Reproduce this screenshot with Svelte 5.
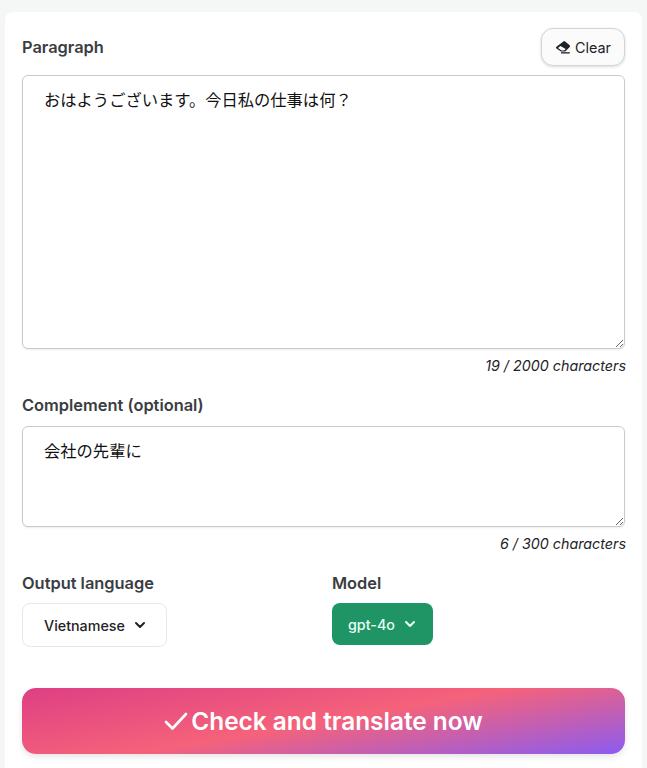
<script>
  let paragraph = $state("おはようございます。今日私の仕事は何？");
  let complement = $state("会社の先輩に");
</script>

<main>
  <section class="card">
    <div class="head">
      <span class="label">Paragraph</span>
      <button class="clear">
        <svg viewBox="0 0 16 16" width="16" height="16" fill="#1f2328">
          <path d="M8.4 2.4a1.2 1.2 0 0 1 1.7 0l4.6 3.9a1.2 1.2 0 0 1 0 1.7l-4.4 4.6H6L1.4 9.4a1.2 1.2 0 0 1 0-1.7zM5.4 6.9 3 9l3.6 2.6h2.6l1.5-1.6z" />
          <rect x="6" y="13.2" width="8.8" height="1.3" />
        </svg>
        Clear
      </button>
    </div>
    <textarea class="big" bind:value={paragraph}></textarea>
    <div class="count">19 / 2000 characters</div>

    <div class="label second">Complement (optional)</div>
    <textarea class="small" bind:value={complement}></textarea>
    <div class="count">6 / 300 characters</div>

    <div class="options">
      <div>
        <div class="label">Output language</div>
        <button class="select">
          Vietnamese
          <svg viewBox="0 0 12 12" width="12" height="12" fill="none" stroke="#1f2328" stroke-width="2" stroke-linecap="round" stroke-linejoin="round"><path d="M2 4l4 4 4-4" /></svg>
        </button>
      </div>
      <div>
        <div class="label">Model</div>
        <button class="model">
          gpt-4o
          <svg viewBox="0 0 12 12" width="12" height="12" fill="none" stroke="#e8fff4" stroke-width="2" stroke-linecap="round" stroke-linejoin="round"><path d="M2 4l4 4 4-4" /></svg>
        </button>
      </div>
    </div>

    <button class="submit">
      <svg viewBox="0 0 24 24" width="24" height="24" fill="none" stroke="#fff" stroke-width="2.6" stroke-linecap="round" stroke-linejoin="round"><path d="M2 13l6.5 6.5L22 5" /></svg>
      Check and translate now
    </button>
  </section>
</main>

<style>
  :global(body) {
    margin: 0;
    background: #f5f7f7;
  }

  main {
    height: 768px;
    overflow: hidden;
    padding: 12px 5px 0 5px;
    box-sizing: border-box;
    font-family: Inter, "Noto Sans CJK JP", sans-serif;
    color: #1f2328;
  }

  .card {
    background: #fff;
    border-radius: 8px 8px 0 0;
    padding: 16px 17px 40px 17px;
    height: 800px;
    box-sizing: border-box;
  }

  .head {
    display: flex;
    justify-content: space-between;
    align-items: center;
    margin-bottom: 9px;
  }

  .label {
    font-size: 16.4px;
    font-weight: 600;
    color: #3a3d42;
    line-height: 24px;
  }

  .clear {
    display: flex;
    align-items: center;
    gap: 4px;
    height: 38px;
    width: 84px;
    justify-content: center;
    box-sizing: border-box;
    border: 1px solid #d1d5db;
    border-radius: 12px;
    background: #fbfbfb;
    box-shadow: 0 1px 3px rgba(0, 0, 0, 0.15);
    font: 400 14.4px Inter, sans-serif;
    color: #1f2328;
    padding: 0;
  }

  textarea {
    display: block;
    width: 100%;
    box-sizing: border-box;
    border: 1px solid #c9cbce;
    border-radius: 6px;
    padding: 12px 20px 12px 21px;
    font-family: Inter, "Noto Sans CJK JP", sans-serif;
    font-size: 16.3px;
    line-height: 24px;
    color: #111;
    outline: none;
    box-shadow: 0 1px 2px rgba(0, 0, 0, 0.08);
  }

  .big {
    height: 274px;
  }

  .small {
    height: 101px;
  }

  .count {
    text-align: right;
    font-size: 14.3px;
    font-style: italic;
    line-height: 20px;
    color: #1f2328;
    margin-top: 7px;
    margin-right: -1px;
  }

  .second {
    margin-top: 17px;
    margin-bottom: 9px;
  }

  .options {
    display: grid;
    grid-template-columns: 310px 1fr;
    margin-top: 17px;
  }

  .options .label {
    margin-bottom: 8px;
  }

  .select {
    display: flex;
    align-items: center;
    gap: 9px;
    height: 44px;
    width: 145px;
    padding: 0 0 0 21px;
    box-sizing: border-box;
    border: 1px solid #e7e8ea;
    border-radius: 8px;
    background: #fff;
    font: 500 14.3px Inter, sans-serif;
    color: #1f2328;
  }

  .model {
    display: flex;
    align-items: center;
    gap: 9px;
    height: 42px;
    width: 101px;
    padding: 0 0 0 16px;
    box-sizing: border-box;
    border: none;
    border-radius: 8px;
    background: #1f9566;
    font: 500 14.3px Inter, sans-serif;
    color: #e8fff4;
  }

  .submit {
    display: flex;
    align-items: center;
    justify-content: center;
    gap: 3px;
    width: 100%;
    height: 66px;
    margin-top: 41px;
    padding: 0;
    border: none;
    border-radius: 14px;
    background: linear-gradient(170deg, #de3f84 0%, #f5627a 50%, #8b5cf0 100%);
    box-shadow: 0 3px 6px rgba(0, 0, 0, 0.1);
    font: 600 24.4px Inter, sans-serif;
    color: #fff;
  }
</style>
